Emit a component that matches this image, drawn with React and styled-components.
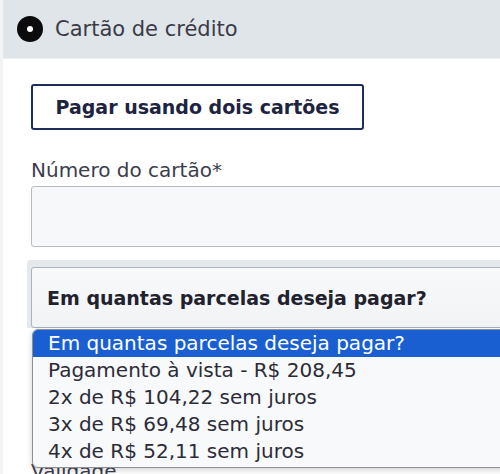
import React from "react";
import styled, { createGlobalStyle } from "styled-components";

const GlobalStyle = createGlobalStyle`
  html, body {
    margin: 0;
    padding: 0;
    background: #f3f4f5;
    overflow: hidden;
  }
  body {
    font-family: "DejaVu Sans", "Noto Sans", sans-serif;
  }
`;

const Page = styled.div`
  width: 500px;
  height: 474px;
  padding-left: 3px;
  box-sizing: border-box;
  overflow: hidden;
`;

const Card = styled.div`
  width: 540px;
  height: 474px;
  background: #ffffff;
  position: relative;
`;

const Header = styled.div`
  height: 58px;
  background: #dfe5e8;
  border-bottom: 1px solid #eef1f3;
  display: flex;
  align-items: center;
  padding-left: 14px;
  gap: 12px;
`;

const Radio = styled.span`
  width: 26px;
  height: 26px;
  border-radius: 50%;
  background: #0b0b0d;
  display: flex;
  align-items: center;
  justify-content: center;
  &::after {
    content: "";
    width: 6px;
    height: 6px;
    border-radius: 50%;
    background: #ffffff;
  }
`;

const Title = styled.span`
  font-size: 21px;
  color: #3b3b48;
`;

const Body = styled.div`
  padding: 25px 0 0 28px;
  position: relative;
`;

const OutlineButton = styled.button`
  width: 333px;
  height: 46px;
  border: 2px solid #1f2d5c;
  border-radius: 3px;
  background: #ffffff;
  color: #1d2340;
  font-family: inherit;
  font-size: 19px;
  font-weight: 600;
  cursor: pointer;
`;

const Label = styled.div`
  margin-top: ${(p) => p.$top || 0}px;
  font-size: 20px;
  color: #3c3d4c;
  line-height: 24px;
`;

const TextInput = styled.div`
  margin-top: 4px;
  width: 520px;
  height: 59px;
  border: 1px solid #b3bcc7;
  border-radius: 3px;
  background: #f7f8fa;
`;

const SelectWrap = styled.div`
  margin-top: 13px;
  margin-left: -4px;
  padding: 7px 0 0 4px;
  background: #e6e9ec;
  border-radius: 4px 0 0 0;
`;

const SelectBox = styled.div`
  width: 520px;
  height: 59px;
  border: 1px solid #a9b2bd;
  border-radius: 3px;
  background: linear-gradient(#f8f9fb, #f1f3f5);
  display: flex;
  align-items: center;
  padding-left: 15px;
  font-size: 19px;
  font-weight: 600;
  color: #22222e;
  box-sizing: content-box;
`;

const Options = styled.ul`
  position: absolute;
  left: 29px;
  top: 270px;
  width: 520px;
  margin: 0;
  padding: 0 0 2px;
  list-style: none;
  background: #f8f9fa;
  border: 1px solid #8e8e94;
  border-radius: 6px 0 0 6px;
  box-shadow: 0 2px 6px rgba(0, 0, 0, 0.18);
  overflow: hidden;
  z-index: 2;
`;

const Option = styled.li`
  height: 27px;
  line-height: 27px;
  padding-left: 15px;
  font-size: 20px;
  color: ${(p) => (p.$active ? "#ffffff" : "#2c2c38")};
  background: ${(p) => (p.$active ? "#1a5fd2" : "transparent")};
`;

const options = [
  "Em quantas parcelas deseja pagar?",
  "Pagamento à vista - R$ 208,45",
  "2x de R$ 104,22 sem juros",
  "3x de R$ 69,48 sem juros",
  "4x de R$ 52,11 sem juros",
];

export default function App() {
  return (
    <Page>
      <GlobalStyle />
      <Card>
        <Header>
          <Radio />
          <Title>Cartão de crédito</Title>
        </Header>
        <Body>
          <OutlineButton>Pagar usando dois cartões</OutlineButton>
          <Label $top={28}>Número do cartão*</Label>
          <TextInput />
          <SelectWrap>
            <SelectBox>Em quantas parcelas deseja pagar?</SelectBox>
          </SelectWrap>
          <Options>
            {options.map((o, i) => (
              <Option key={o} $active={i === 0}>
                {o}
              </Option>
            ))}
          </Options>
          <Label $top={131}>Validade</Label>
        </Body>
      </Card>
    </Page>
  );
}
